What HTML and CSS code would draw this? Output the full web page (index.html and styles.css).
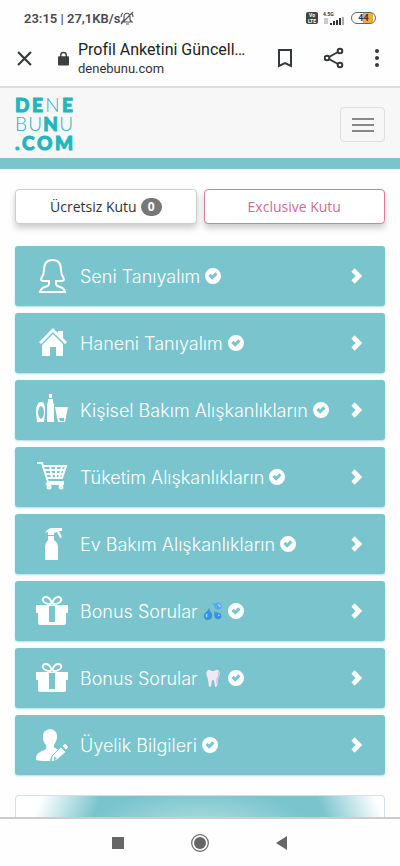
FILE: index.html
```html
<!DOCTYPE html>
<html lang="tr">
<head>
<meta charset="utf-8">
<meta name="viewport" content="width=device-width, initial-scale=1">
<title>Profil Anketini Güncelle</title>
<link rel="stylesheet" href="styles.css">
</head>
<body>
<svg class="sprite" aria-hidden="true">
  <symbol id="check" viewBox="0 0 16 16"><path fill="#fff" fill-rule="evenodd" d="M8 0a8 8 0 1 0 0 16A8 8 0 0 0 8 0Zm2.300 4.300 2.200 2.200-5.300 5.300-3.800-3.800 2.200-2.200 1.600 1.600Z"/></symbol>
  <symbol id="chevron" viewBox="0 0 12 16"><path d="m2 2 6 6-6 6" fill="none" stroke="#fff" stroke-width="4.600"/></symbol>
  <symbol id="gift" viewBox="0 0 32 30"><path d="M15 8C5 8 5 1 10 1c3 0 5 3 6 7 1-4 3-7 6-7 5 0 5 7-5 7" fill="none" stroke="#fff" stroke-width="2"/><path fill="#fff" fill-rule="evenodd" d="M0 9h32v8h-2v10q0 2-2 2H4q-2 0-2-2V17H0Zm13 1v16h6V10Z"/></symbol>
</svg>

<header class="browser">
  <div class="status">
    <span class="clock">23:15 | 27,1KB/s</span>
    <svg class="mute" viewBox="0 0 14 14" fill="none" stroke="#555" stroke-width="1.200"><path d="M2 11h10l-2-2V6c0-5-6-5-6 0v3ZM6 13h3M1 13 13 1M1 6q0-3 2-4M13 6q0-2-1-3"/></svg>
    <span class="spacer"></span>
    <span class="volte"><span>Vo</span><span>LTE</span></span>
    <span class="network"><span>4.5G</span>
      <svg viewBox="0 0 22 8"><path d="M2 1v6M4 1v6" stroke="#999"/><path d="M7 6h2v2H7zM10 4h2v4h-2zM13 3h2v5h-2zM16 1h2v7h-2z" fill="#333"/><path d="M19 0h2v8h-2z" fill="#aaa"/></svg>
    </span>
    <span class="battery">44</span>
  </div>
  <div class="address">
    <button class="close" aria-label="Kapat"><svg viewBox="0 0 14 14"><path d="m1 1 12 12M13 1 1 13" fill="none" stroke="#35383b" stroke-width="2"/></svg></button>
    <svg class="lock" viewBox="0 0 12 15"><path d="M3 6V4c0-4 6-4 6 0v2" fill="none" stroke="#3c4043" stroke-width="1.500"/><rect y="5" width="12" height="10" rx="1" fill="#3c4043"/></svg>
    <div class="page-name"><div class="page-title">Profil Anketini Güncell…</div><div class="domain">denebunu.com</div></div>
    <div class="actions">
      <button aria-label="Yer işareti"><svg width="16" height="20" viewBox="0 0 16 20"><path d="M2 2h12v16l-6-3-6 3Z" fill="none" stroke="#35383b" stroke-width="2"/></svg></button>
      <button aria-label="Paylaş"><svg width="20" height="22" viewBox="0 0 20 22" fill="none" stroke="#35383b" stroke-width="2"><path d="M14 5 5 10m0 2 9 5"/><circle cx="16" cy="4" r="2.300"/><circle cx="3" cy="11" r="2.300"/><circle cx="16" cy="18" r="2.300"/></svg></button>
      <button class="more" aria-label="Diğer"><svg width="4" height="18" viewBox="0 0 4 18" fill="#35383b"><circle cx="2" cy="2" r="2"/><circle cx="2" cy="9" r="2"/><circle cx="2" cy="16" r="2"/></svg></button>
    </div>
  </div>
</header>

<div class="viewport">
  <header class="site-header">
    <a class="logo" href="#" aria-label="denebunu.com">
      <span class="logo-row"><b>D</b><b>E</b><i>N</i><b>E</b></span>
      <span class="logo-row"><i>B</i><i>U</i><b>N</b><i>U</i></span>
      <span class="logo-row"><b>.</b><b>C</b><b>O</b><b>M</b></span>
    </a>
    <button class="menu" aria-label="Menü"><span></span><span></span><span></span></button>
  </header>
  <main>
    <div class="boxes">
      <button class="box">Ücretsiz Kutu <span class="badge">0</span></button>
      <button class="box exclusive">Exclusive Kutu</button>
    </div>
    <nav class="surveys" aria-label="Profil anketleri">
      <a class="tile" href="#"><svg class="icon" viewBox="0 0 32 34" fill="none" stroke="#fff" stroke-width="2"><path d="M13 22H8q-3 0-3-2c2-3 3-5 3-9C8 5 10 1 16.500 1S25 5 25 11c0 4 1 6 3 9q0 2-3 2h-5v3q0 2 4 3 4 1 5 5H4q1-4 5-5 4-1 4-3Z"/></svg><span class="label">Seni Tanıyalım</span><svg class="check"><use href="#check"/></svg><svg class="chevron"><use href="#chevron"/></svg></a>
      <a class="tile" href="#"><svg class="icon" viewBox="0 0 32 34" fill="#fff"><path d="m17 2 5 5V5h5v7l4 4-2 2L17 6 5 18l-2-2Z"/><path d="m17 8 10 10v12h-7V21h-6v9H6V19Z"/></svg><span class="label">Haneni Tanıyalım</span><svg class="check"><use href="#check"/></svg><svg class="chevron"><use href="#chevron"/></svg></a>
      <a class="tile" href="#"><svg class="icon" viewBox="0 0 32 34" fill="#fff"><path fill-rule="evenodd" d="M2 11q0-2 3-2t3 2c1 2 1 5 1 9l-1 9H1L0 20q0-7 2-9Zm3 2c-4 2-4 11 0 13 4-2 4-11 0-13Z"/><path d="M13 1h3v4h-3zM12 6h5v3l1 2v18h-7V11l1-2Z"/><path fill-rule="evenodd" d="M19 14h13l-3 15h-7Zm4 11 1 3h4v-3Z"/></svg><span class="label">Kişisel Bakım Alışkanlıkların</span><svg class="check"><use href="#check"/></svg><svg class="chevron"><use href="#chevron"/></svg></a>
      <a class="tile" href="#"><svg class="icon" viewBox="0 0 32 34" fill="none" stroke="#fff" stroke-width="2"><path d="M1 3h5l6 19h16M7 6h23l-4 12H11M8 10h21M10 14h18M14 6l2 12M20 6v12M26 6l-3 12M12 22l-1 2h17"/><circle cx="13" cy="27" r="1.500"/><circle cx="25" cy="27" r="1.500"/></svg><span class="label">Tüketim Alışkanlıkların</span><svg class="check"><use href="#check"/></svg><svg class="chevron"><use href="#chevron"/></svg></a>
      <a class="tile" href="#"><svg class="icon" viewBox="0 0 32 34" fill="#fff"><path d="M9 6q3-5 7-5h10v3h-3l3 6-2 1-3-6-3 1v2h-6V5ZM12 9h6v4q4 3 4 7v13H9V20q0-4 3-7Z"/></svg><span class="label">Ev Bakım Alışkanlıkların</span><svg class="check"><use href="#check"/></svg><svg class="chevron"><use href="#chevron"/></svg></a>
      <a class="tile" href="#"><svg class="icon"><use href="#gift"/></svg><span class="label">Bonus Sorular</span><svg class="emoji" viewBox="0 0 20 20" role="img" aria-label="Damlalar"><path fill="#3b91df" d="M6 7c1 4 4 5 3 9-1 4-8 4-8 0-1-4 4-5 5-9Z"/><path fill="#56a9ef" d="M9 2c4 1 7-2 9 1 3 4-2 7-5 5-2-1-1-4-4-6Z"/><path fill="#3b91df" d="M11 10c2 2 5 1 7 3 2 4-2 6-4 5-4-1-2-5-3-8Z"/><path d="M4 13q-1 2 0 3M15 4q2 0 2 2M15 14q1 0 1 1" fill="none" stroke="#a6d8ff" stroke-width="1.500"/></svg><svg class="check"><use href="#check"/></svg><svg class="chevron"><use href="#chevron"/></svg></a>
      <a class="tile" href="#"><svg class="icon"><use href="#gift"/></svg><span class="label">Bonus Sorular</span><svg class="emoji" viewBox="0 0 20 20" role="img" aria-label="Diş"><path fill="#eee9f5" d="M4 3c2-3 4 0 6 0s4-3 6 0c2 4-1 6-1 9s-1 7-2 7c-2 0-1-7-3-7s-1 7-3 7C5 19 6 15 5 12 5 9 2 7 4 3Z"/><path d="M15 4q2 3-1 7v5" fill="none" stroke="#cfc7e2" stroke-width="1.500"/></svg><svg class="check"><use href="#check"/></svg><svg class="chevron"><use href="#chevron"/></svg></a>
      <a class="tile" href="#"><svg class="icon" viewBox="0 0 32 34" fill="#fff"><path d="M7 8c0-9 14-9 14 0 0 5-2 7-3 9-1 3 3 4 6 5l-9 7-1 4c-6 0-11 0-14-1 0-6 2-7 6-9 4-1 5-3 4-6-2-2-3-4-3-9Z"/><path d="m16 28 9-9 5 5-9 8-6 2Zm10-10 2-2q1-1 2 0l2 2q1 1 0 2l-2 2Z" stroke="#79c4cd"/><path d="m18 28 3 3-3 1Z" fill="#79c4cd"/></svg><span class="label">Üyelik Bilgileri</span><svg class="check"><use href="#check"/></svg><svg class="chevron"><use href="#chevron"/></svg></a>
    </nav>
    <section class="banner"></section>
  </main>
</div>

<nav class="system" aria-label="Sistem">
  <button aria-label="Son uygulamalar"><svg viewBox="0 0 18 18"><path d="M3 3h12v12H3Z" fill="#666"/></svg></button>
  <button aria-label="Ana ekran"><svg viewBox="0 0 18 18"><circle cx="9" cy="9" r="8.300" fill="none" stroke="#666" stroke-width="1.200"/><circle cx="9" cy="9" r="6" fill="#666"/></svg></button>
  <button aria-label="Geri"><svg viewBox="0 0 18 18"><path d="M14 2v14L3 9Z" fill="#666"/></svg></button>
</nav>
</body>
</html>
```
FILE: styles.css
```css
* { box-sizing: border-box; }

body {
  margin: 0;
  height: 100vh;
  display: flex;
  flex-direction: column;
  overflow: hidden;
  background: #fefefe;
  font-family: "Open Sans", sans-serif;
  color: #333;
}

button {
  padding: 0;
  border: 0;
  background: none;
  font: inherit;
  color: inherit;
}

svg { display: block; flex: none; }
a { text-decoration: none; }
.sprite { position: absolute; width: 0; height: 0; }

/* Browser chrome */
.browser {
  flex: none;
  border-bottom: 2px solid #dedede;
  font-family: Roboto, sans-serif;
}

.status {
  display: flex;
  align-items: center;
  height: 36px;
  padding: 0 24px;
}
.clock { font-size: 13px; font-weight: 600; color: #4a4a4a; }
.mute { width: 14px; height: 14px; margin-left: 0; }
.spacer { flex: 1; }

.volte {
  display: flex;
  flex-direction: column;
  width: 12px;
  height: 12px;
  border-radius: 2px;
  background: #444;
  color: #fff;
  font-size: 5px;
  font-weight: 700;
  line-height: 6px;
  text-align: center;
}
.network {
  display: flex;
  flex-direction: column;
  width: 22px;
  margin: 0 6px 0 5px;
  font-size: 5px;
  font-weight: 700;
  line-height: 5px;
}
.network svg { width: 22px; height: 8px; }
.battery {
  width: 25px;
  height: 12px;
  border: 1px solid #666;
  border-radius: 6px;
  background: linear-gradient(90deg, #fff 48%, #f3ac35 48%, #f3ac35 90%, #fff 90%);
  font-size: 9px;
  font-weight: 700;
  line-height: 10px;
  text-align: center;
}

.address {
  display: flex;
  align-items: center;
  height: 50px;
  padding: 0 21px 6px 17px;
}
.close svg { width: 15px; height: 15px; }
.lock { width: 11px; height: 15px; margin: 0 9px 0 26px; }
.page-name { flex: 1; min-width: 0; }
.page-title {
  white-space: nowrap;
  font-size: 16px;
  line-height: 22px;
  color: #222;
}
.domain { font-size: 13px; line-height: 16px; color: #333; }
.actions { display: flex; align-items: center; gap: 31px; }

/* Site header */
.viewport { flex: 1; min-height: 0; overflow: hidden; }

.site-header {
  display: flex;
  align-items: center;
  justify-content: space-between;
  height: 81px;
  padding: 0 15px;
  border-bottom: 11px solid #79c4cd;
  background: #f7f7f7;
}
.logo { width: 58px; color: #20b6bf; font-family: Lato, sans-serif; }
.logo-row {
  display: flex;
  justify-content: space-between;
  font-size: 19px;
  line-height: 19px;
}
.logo b { font-weight: 900; -webkit-text-stroke: 1px #20b6bf; }
.logo i { font-weight: 300; font-style: normal; }

.menu {
  display: flex;
  flex-direction: column;
  align-items: center;
  justify-content: center;
  gap: 4px;
  width: 45px;
  height: 35px;
  margin-top: 3px;
  border: 1px solid #ddd;
  border-radius: 4px;
}
.menu span { width: 22px; height: 2px; background: #888; }

/* Content */
main { padding: 20px 15px 0; }

.boxes { display: flex; gap: 7px; }
.box {
  display: flex;
  flex: 1;
  align-items: center;
  justify-content: center;
  gap: 4px;
  height: 35px;
  border: 1px solid #ccc;
  border-radius: 4px;
  background: #fff;
  box-shadow: 0 4px 6px #ccc;
  font-size: 14px;
}
.exclusive { border-color: #d97c9e; color: #cf6c91; }
.badge {
  padding: 0 7px;
  border-radius: 10px;
  background: #777;
  color: #fff;
  font-size: 12px;
  font-weight: 700;
  line-height: 18px;
}

.surveys {
  display: flex;
  flex-direction: column;
  gap: 7px;
  margin-top: 22px;
}
.tile {
  display: flex;
  align-items: center;
  height: 60px;
  padding: 0 22px 0 21px;
  border-radius: 3px;
  background: #79c4cd;
  box-shadow: 0 1px 2px #b4dce1;
  color: #fff;
}
.icon { width: 32px; height: 34px; }
.label {
  margin-left: 12px;
  padding-top: 2px;
  font-family: Inter, sans-serif;
  font-size: 18px;
  font-weight: 300;
  line-height: 24px;
  white-space: nowrap;
}
.check { width: 16px; height: 16px; margin-left: 5px; }
.emoji { width: 20px; height: 20px; margin-left: 5px; }
.chevron { width: 12px; height: 16px; margin-left: auto; }

.banner {
  height: 160px;
  margin-top: 20px;
  border: 1px solid #cfe3e6;
  border-radius: 4px;
  background:
    radial-gradient(ellipse 110px 36px at 50% 30px, #afdce0, transparent),
    linear-gradient(110deg, #fff 6%, transparent 20%),
    linear-gradient(250deg, #fff 2%, transparent 16%),
    #79c4cd;
}

/* System navigation */
.system {
  display: flex;
  align-items: center;
  justify-content: center;
  gap: 64px;
  flex: none;
  height: 49px;
  border-top: 2px solid #ccc;
}
.system svg { width: 18px; height: 18px; }
```
